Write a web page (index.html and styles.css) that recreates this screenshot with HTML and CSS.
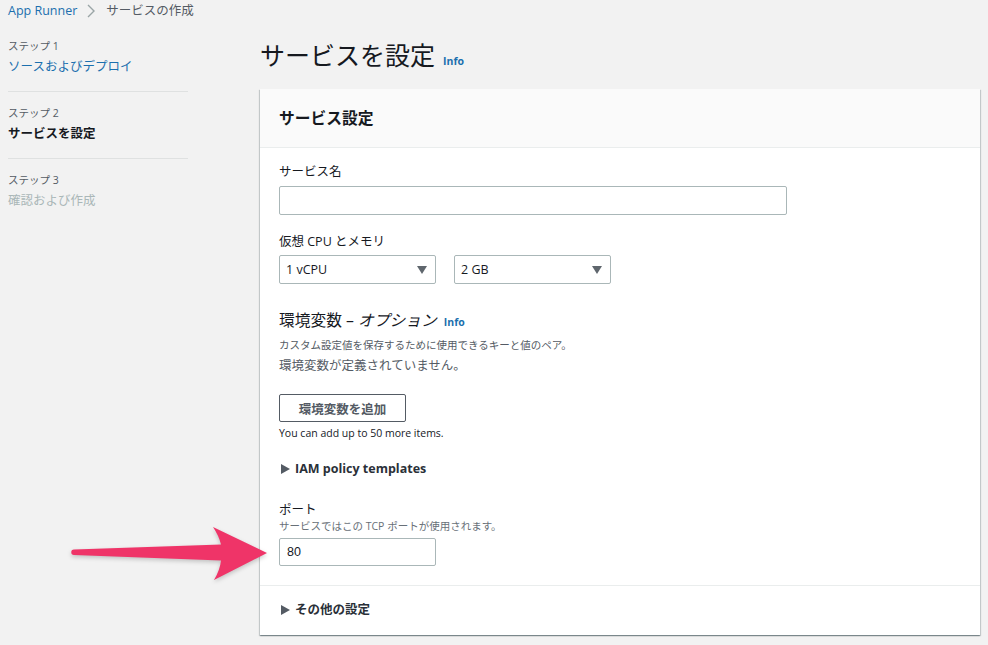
FILE: index.html
```html
<!DOCTYPE html>
<html lang="ja">
<head>
<meta charset="utf-8">
<title>サービスを設定</title>
<link rel="stylesheet" href="styles.css">
</head>
<body>
<div class="crumbs">
  <a class="crumb-link" href="#">App Runner</a>
  <svg class="crumb-sep" width="10" height="14" viewBox="0 0 10 14"><polyline points="2,1 8,7 2,13" fill="none" stroke="#9aa5a6" stroke-width="1.4"/></svg>
  <span class="crumb-current">サービスの作成</span>
</div>
<div class="layout">
  <nav class="steps">
    <div class="step">
      <div class="step-label">ステップ 1</div>
      <a class="step-title link" href="#">ソースおよびデプロイ</a>
    </div>
    <div class="step">
      <div class="step-label">ステップ 2</div>
      <div class="step-title current">サービスを設定</div>
    </div>
    <div class="step last">
      <div class="step-label">ステップ 3</div>
      <div class="step-title disabled">確認および作成</div>
    </div>
  </nav>
  <main class="main">
    <div class="page-head">
      <h1 class="page-title">サービスを設定</h1>
      <a class="info" href="#">Info</a>
    </div>
    <section class="card">
      <header class="card-head"><h2 class="card-title">サービス設定</h2></header>
      <div class="card-body">
        <div class="field-label">サービス名</div>
        <input class="text-input wide" type="text" value="">
        <div class="field-label gap">仮想 CPU とメモリ</div>
        <div class="select-row">
          <div class="select"><span>1 vCPU</span><svg width="10" height="8" viewBox="0 0 10 8"><polygon points="0,0 10,0 5,8" fill="#5f666d"/></svg></div>
          <div class="select"><span>2 GB</span><svg width="10" height="8" viewBox="0 0 10 8"><polygon points="0,0 10,0 5,8" fill="#5f666d"/></svg></div>
        </div>
        <div class="section-head">
          <h3 class="section-title">環境変数 – <em>オプション</em></h3>
          <a class="info" href="#">Info</a>
        </div>
        <div class="desc">カスタム設定値を保存するために使用できるキーと値のペア。</div>
        <div class="empty">環境変数が定義されていません。</div>
        <button class="btn" type="button">環境変数を追加</button>
        <div class="hint">You can add up to 50 more items.</div>
        <div class="expander iam"><svg width="9" height="10" viewBox="0 0 9 10"><polygon points="0,0 9,5 0,10" fill="#545b64"/></svg><span>IAM policy templates</span></div>
        <div class="field-label port-label">ポート</div>
        <div class="field-desc">サービスではこの TCP ポートが使用されます。</div>
        <input class="text-input narrow port" type="text" value="80">
      </div>
      <div class="card-foot">
        <div class="expander"><svg width="9" height="10" viewBox="0 0 9 10"><polygon points="0,0 9,5 0,10" fill="#545b64"/></svg><span>その他の設定</span></div>
      </div>
    </section>
  </main>
</div>
<svg class="arrow" width="988" height="645" viewBox="0 0 988 645">
  <path d="M74 549.5 L221 544.5 Q219 536 213 527 L267 553 L214 580 Q220 570 221 560.5 L74 555 A2.75 2.75 0 0 1 74 549.5 Z" fill="#ef3468"/>
</svg>
</body>
</html>
```
FILE: styles.css
```css
* { box-sizing: border-box; }
body {
  margin: 0;
  background: #f2f2f2;
  font-family: "Open Sans", "Noto Sans CJK JP", sans-serif;
  font-size: 12.5px;
  color: #16191f;
  position: relative;
  width: 988px;
  height: 645px;
  overflow: hidden;
}
a { text-decoration: none; }
.crumbs {
  height: 22px;
  padding-left: 8px;
  display: flex;
  align-items: center;
  line-height: 22px;
}
.crumb-link { color: #1b6fae; font-size: 12.5px; }
.crumb-sep { margin: 0 10px 0 9px; }
.crumb-current { color: #545b64; font-size: 12.5px; }

.layout { display: flex; }
.steps {
  width: 180px;
  margin-left: 8px;
  padding-top: 3px;
  flex: none;
}
.step {
  padding: 12px 0 13px;
  border-bottom: 1px solid #dfe1e1;
}
.step.last { border-bottom: none; }
.step-label {
  font-size: 10.5px;
  line-height: 18px;
  margin-bottom: 1px;
  color: #545b64;
}
.step-title {
  display: block;
  font-size: 12.5px;
  line-height: 22px;
}
.step-title.link { color: #1b6fae; }
.step-title.current { font-weight: 700; color: #16191f; }
.step-title.disabled { color: #aab7b8; }

.main {
  flex: 1;
  margin-left: 72px;
  margin-right: 8px;
}
.page-head {
  display: flex;
  align-items: baseline;
  padding-top: 16px;
  margin-bottom: 17px;
}
.page-title {
  margin: 0;
  font-size: 25px;
  font-weight: 400;
  line-height: 34px;
  color: #16191f;
}
.info {
  color: #1b6fae;
  font-size: 10.5px;
  font-weight: 700;
  margin-left: 8px;
}
.card {
  background: #fff;
  box-shadow: 0 1px 1px 0 rgba(0,28,36,.3), 1px 1px 1px 0 rgba(0,28,36,.15), -1px 1px 1px 0 rgba(0,28,36,.15);
}
.card-head {
  background: #fafafa;
  padding: 18px 19px;
  border-bottom: 1px solid #eaeded;
}
.card-title {
  margin: 0;
  font-size: 15.75px;
  font-weight: 700;
  line-height: 22px;
}
.card-body {
  padding: 15px 19px 19px;
  border-bottom: 1px solid #eaeded;
}
.field-label {
  font-size: 12.5px;
  line-height: 18px;
  margin-bottom: 5px;
}
.field-label.gap { margin-top: 18px; margin-bottom: 4px; }
.text-input {
  display: block;
  height: 29px;
  border: 1px solid #aab7b8;
  border-radius: 2px;
  background: #fff;
  font-family: "Liberation Sans", Arial, sans-serif;
  font-size: 12.5px;
  color: #16191f;
  padding: 0 7px;
  outline: none;
}
.text-input.wide { width: 508px; }
.text-input.narrow { width: 157px; height: 28px; }
.select-row { display: flex; gap: 18px; }
.select {
  width: 157px;
  height: 29px;
  border: 1px solid #aab7b8;
  border-radius: 2px;
  display: flex;
  align-items: center;
  justify-content: space-between;
  padding: 0 8px 0 6px;
  font-size: 12.5px;
}
.section-head {
  display: flex;
  align-items: baseline;
  margin-top: 25px;
}
.section-title {
  margin: 0;
  font-size: 15.75px;
  font-weight: 400;
  line-height: 22px;
}
.section-title em { font-style: italic; }
.section-head .info { margin-left: 7px; }
.desc {
  margin-top: 6px;
  font-size: 10.5px;
  line-height: 16px;
  color: #545b64;
}
.empty {
  margin-top: 4px;
  font-size: 12.5px;
  line-height: 18px;
  color: #545b64;
}
.btn {
  display: block;
  margin-top: 19px;
  width: 127px;
  height: 28px;
  border: 1px solid #545b64;
  border-radius: 2px;
  background: #fff;
  font-family: "Open Sans", "Noto Sans CJK JP", sans-serif;
  font-size: 12.5px;
  font-weight: 700;
  color: #545b64;
  padding: 0;
}
.hint {
  margin-top: 4px;
  font-size: 10.5px;
  line-height: 15px;
  color: #16191f;
}
.expander {
  display: flex;
  align-items: center;
  gap: 5px;
  padding-left: 2px;
  font-size: 12.5px;
  font-weight: 700;
  line-height: 18px;
}
.expander span { color: #2a3038; }
.iam { margin-top: 19px; }
.port-label { margin-top: 23px; margin-bottom: 0; }
.field-desc {
  font-size: 10.5px;
  line-height: 14px;
  color: #687078;
  margin-bottom: 5px;
}
.card-foot {
  padding: 15px 19px 16px;
}
.arrow {
  position: absolute;
  left: 0;
  top: 0;
  pointer-events: none;
  filter: drop-shadow(0 2px 2px rgba(0,0,0,.2));
}
```
